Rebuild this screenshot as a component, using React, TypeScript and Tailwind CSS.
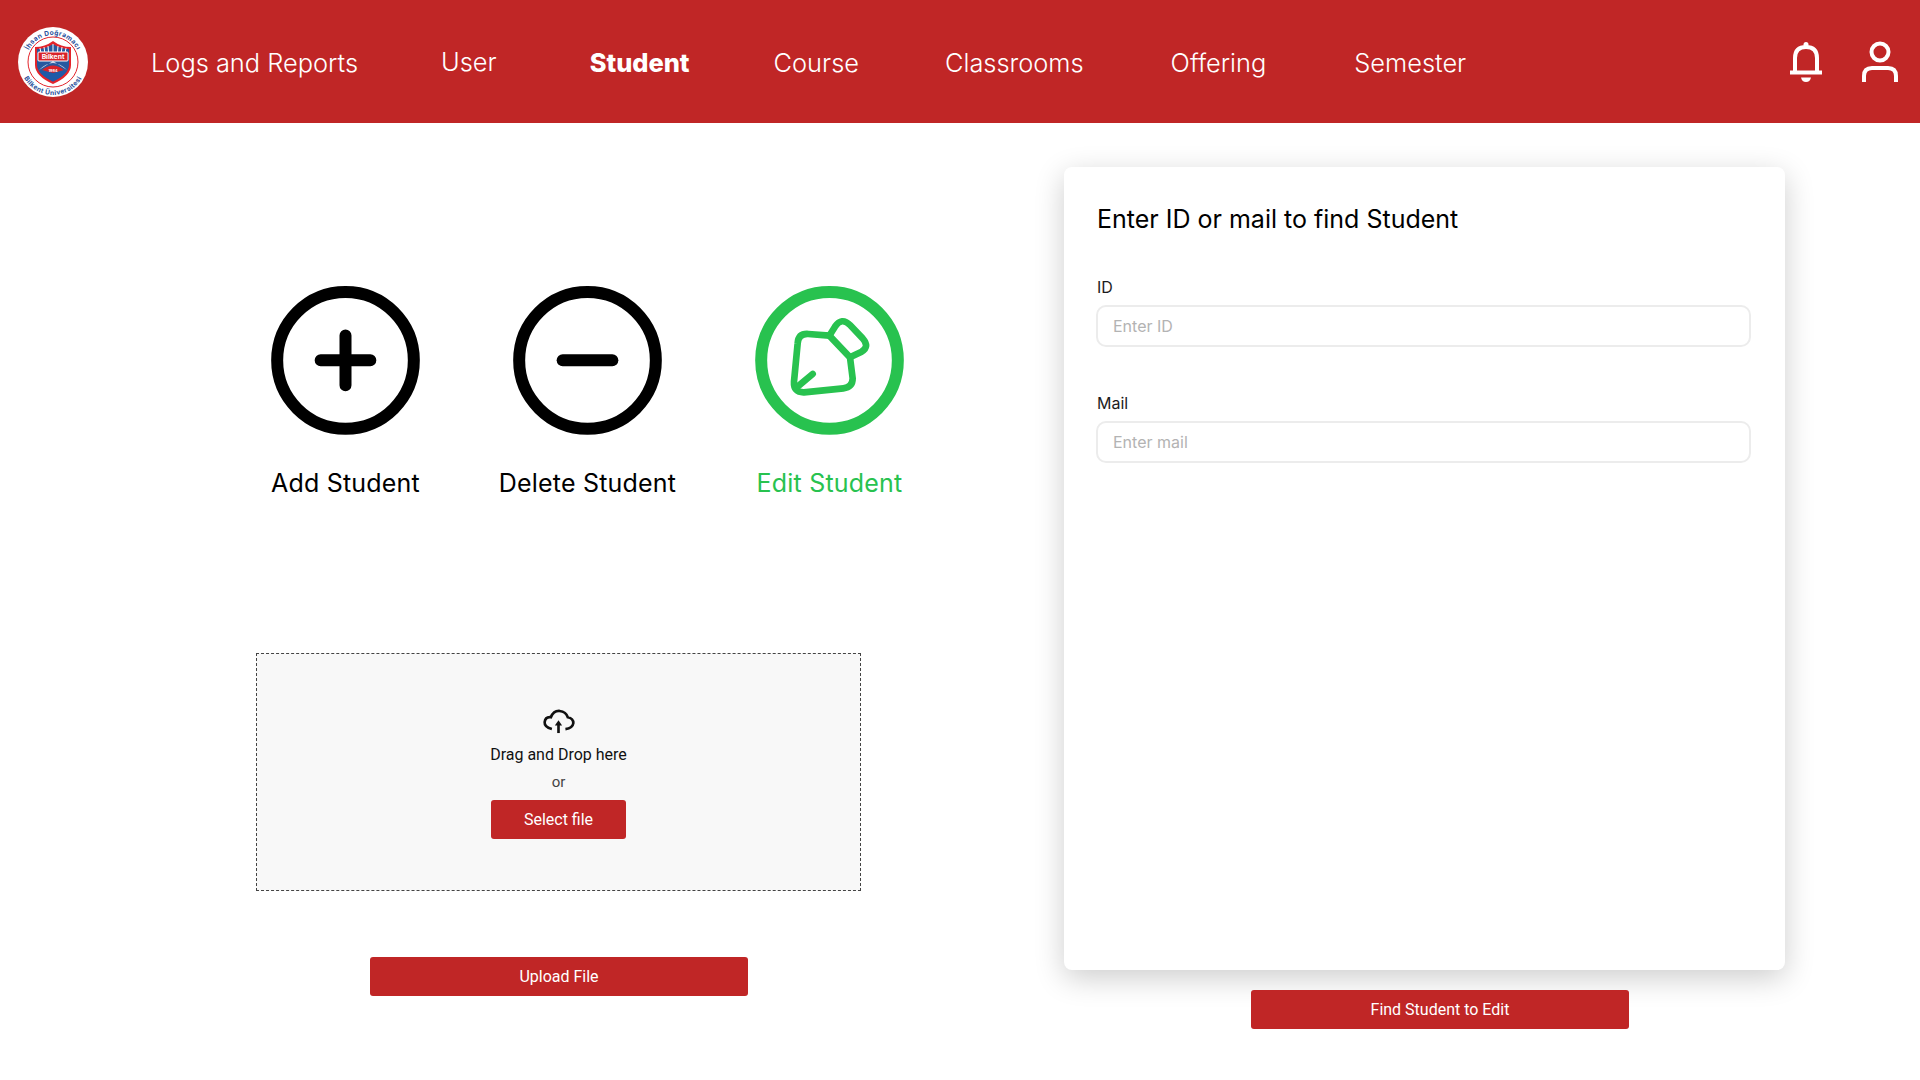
const navItems = [
  { label: "Logs and Reports", margin: "ml-[62px]" },
  { label: "User", margin: "ml-[83px]", raised: true },
  { label: "Student", margin: "ml-[93px]", active: true },
  { label: "Course", margin: "ml-[84px]" },
  { label: "Classrooms", margin: "ml-[86px]" },
  { label: "Offering", margin: "ml-[87px]" },
  { label: "Semester", margin: "ml-[88px]" },
];

function Logo() {
  return (
    <svg width="72" height="72" viewBox="0 0 72 72" className="shrink-0">
      <circle cx="36" cy="36" r="35" fill="#fff" />
      <circle cx="36" cy="36" r="25" fill="#fff" stroke="#e3242b" strokeWidth="1" />
      <defs>
        <path id="logo-top" d="M9 36 A27 27 0 0 1 63 36" />
        <path id="logo-bottom" d="M3 36 A33 33 0 0 0 69 36" />
      </defs>
      <text fontSize="6.600" fontWeight="700" fill="#1f4f9c" letterSpacing="0.4" fontFamily="Inter, sans-serif">
        <textPath href="#logo-top" startOffset="50%" textAnchor="middle">İhsan Doğramacı</textPath>
      </text>
      <text fontSize="6.600" fontWeight="700" fill="#1f4f9c" letterSpacing="0.4" fontFamily="Inter, sans-serif">
        <textPath href="#logo-bottom" startOffset="50%" textAnchor="middle">Bilkent Üniversitesi</textPath>
      </text>
      <path d="M18 21 Q28 21 36 15 Q44 21 54 21 L54 39 Q54 50 36 58 Q18 50 18 39 Z" fill="#e3242b" />
      <path d="M20 23 Q29 23 36 18 Q43 23 52 23 L52 39 Q52 48 36 55.500 Q20 48 20 39 Z" fill="#27599f" />
      <path d="M23 22 L25 32 M27 21 L28.500 32 M31 20 L32 32 M36 18 L36 32 M41 20 L40 32 M45 21 L43.500 32 M49 22 L47 32" stroke="#fff" strokeWidth="1" />
      <path d="M22 44 Q29 37 36 37 Q43 37 50 44 L36 35 Z" fill="#cfd8ea" />
      <path d="M25 44 Q36 35 47 44 L36 47 Z" fill="#d8232a" />
      <path d="M22.500 45 Q36 49 49.500 45 Q47 50 36 55.500 Q25 50 22.500 45 Z" fill="#1f5aa8" />
      <rect x="21" y="26" width="30" height="9" rx="1" fill="#d8232a" stroke="#fff" strokeWidth="1" />
      <text x="36" y="33" textAnchor="middle" fontSize="6.800" fontWeight="700" fill="#fff" fontFamily="Inter, sans-serif">Bilkent</text>
      <text x="36" y="46" textAnchor="middle" fontSize="3.800" fontWeight="700" fill="#fff" fontFamily="Inter, sans-serif">1984</text>
    </svg>
  );
}

function Bell() {
  return (
    <svg width="34" height="42" viewBox="0 0 34 42" fill="none" stroke="#fff" strokeWidth="4">
      <path d="M1 31.500 H33" />
      <path d="M6 31 V17 Q6 6 17 6 Q28 6 28 17 V31" />
      <circle cx="17" cy="3.500" r="2.500" fill="#fff" stroke="none" />
      <path d="M12 36.500 H22 Q21 41 17 41 Q13 41 12 36.500 Z" fill="#fff" stroke="none" />
    </svg>
  );
}

function UserIcon() {
  return (
    <svg width="36" height="42" viewBox="0 0 36 42" fill="none" stroke="#fff" strokeWidth="4">
      <circle cx="18" cy="11" r="8.500" />
      <path d="M2 41 V35 Q2 27 10 27 H26 Q34 27 34 35 V41" />
    </svg>
  );
}

function RoundIcon({ children, color }: { children: React.ReactNode; color: string }) {
  return (
    <svg width="149" height="149" viewBox="75 48 447 447" fill="none" stroke={color} strokeLinecap="round" strokeLinejoin="round">
      <circle cx="298.500" cy="271" r="205" strokeWidth="36" />
      {children}
    </svg>
  );
}

function ActionItem({ label, green, children }: { label: string; green?: boolean; children: React.ReactNode }) {
  return (
    <div className="flex w-[200px] flex-col items-center">
      {children}
      <div className={`mt-[32px] text-[25px] leading-[32px] tracking-[0.2px] ${green ? "text-[#28c24f]" : "text-black"}`}>{label}</div>
    </div>
  );
}

function Field({ label, placeholder, className }: { label: string; placeholder: string; className?: string }) {
  return (
    <div className={className}>
      <label className="block text-[16px] leading-[20px] text-[#1c1c1c]">{label}</label>
      <input
        placeholder={placeholder}
        className="-ml-[1px] mt-[8px] block h-[42px] w-[655px] rounded-[10px] border-2 border-[#ececec] bg-white px-[15px] text-[16px] outline-none placeholder:text-[#b3b3b3]"
      />
    </div>
  );
}

export default function App() {
  return (
    <div className="min-h-[1080px] w-[1920px] overflow-hidden bg-white font-['Inter',sans-serif]">
      {/* Top bar */}
      <header className="flex h-[123px] items-center bg-[#c02626] pl-[17px] text-white">
        <Logo />
        <nav className="flex items-center pt-[2px] text-[25.4px] leading-[32px]">
          {navItems.map((item) => (
            <a
              key={item.label}
              className={`${item.margin} ${item.active ? "font-extrabold" : "font-light"} ${item.raised ? "-mt-[2px]" : ""}`}
            >
              {item.label}
            </a>
          ))}
        </nav>
        <div className="ml-auto flex items-center gap-[39px] pr-[22px]">
          <Bell />
          <UserIcon />
        </div>
      </header>

      <main className="flex">
        {/* Left side */}
        <section className="w-[1064px] shrink-0 pl-[245.5px] pt-[163px]">
          <div className="flex gap-[42px]">
            <ActionItem label="Add Student">
              <RoundIcon color="#000">
                <path d="M298.500 196.500 V345.500 M224 271 H373" strokeWidth="36" />
              </RoundIcon>
            </ActionItem>
            <ActionItem label="Delete Student">
              <RoundIcon color="#000">
                <path d="M224 271 H373" strokeWidth="36" />
              </RoundIcon>
            </ActionItem>
            <ActionItem label="Edit Student" green>
              <RoundIcon color="#28c24f">
                <g strokeWidth="20">
                  <path d="M298 197 L235 192 Q205 190 203 220 L192 335 Q190 368 222 367 L340 355 Q368 352 368 325 L360 262 Z" />
                  <path d="M298 197 L315 170 Q335 140 360 165 L398 205 Q420 230 395 245 L360 262" />
                  <path d="M200 352 L248 312" />
                </g>
              </RoundIcon>
            </ActionItem>
          </div>

          <div className="ml-[10.5px] mt-[154px] flex h-[238px] w-[605px] flex-col items-center border border-dashed border-[#444] bg-[#f8f8f8] pt-[54px] font-['Roboto',sans-serif]">
            <svg width="33" height="27" viewBox="305 55 100 80" fill="none" stroke="#111" strokeWidth="8">
              <path d="M335 118 Q312 112 313 97 Q315 80 332 82 Q340 62 358 63 Q378 65 383 82 Q400 85 400 100 Q398 115 376 118" />
              <path d="M355 130 V100" />
              <path d="M344 107 L355 91 L366 107 Z" fill="#111" stroke="none" />
            </svg>
            <div className="mt-[10px] text-[16px] leading-[20px] text-[#111]">Drag and Drop here</div>
            <div className="mt-[7px] text-[15px] leading-[20px] text-[#444]">or</div>
            <button className="mt-[8px] h-[39px] w-[135px] rounded-[3px] bg-[#c02626] text-[16px] text-white">Select file</button>
          </div>

          <button className="ml-[124.5px] mt-[66px] block h-[39px] w-[378px] rounded-[3px] bg-[#c02626] font-['Roboto',sans-serif] text-[16px] text-white">
            Upload File
          </button>
        </section>

        {/* Find student card */}
        <section className="pt-[44px]">
          <div className="h-[803px] w-[721px] rounded-[8px] bg-white pl-[33px] pt-[36px] shadow-[0_8px_30px_rgba(0,0,0,0.2)]">
            <h2 className="text-[25px] font-normal leading-[32px] text-black">Enter ID or mail to find Student</h2>
            <Field label="ID" placeholder="Enter ID" className="mt-[42px]" />
            <Field label="Mail" placeholder="Enter mail" className="mt-[46px]" />
          </div>
          <button className="ml-[187px] mt-[20px] block h-[39px] w-[378px] rounded-[3px] bg-[#c02626] font-['Roboto',sans-serif] text-[16px] text-white">
            Find Student to Edit
          </button>
        </section>
      </main>
    </div>
  );
}
